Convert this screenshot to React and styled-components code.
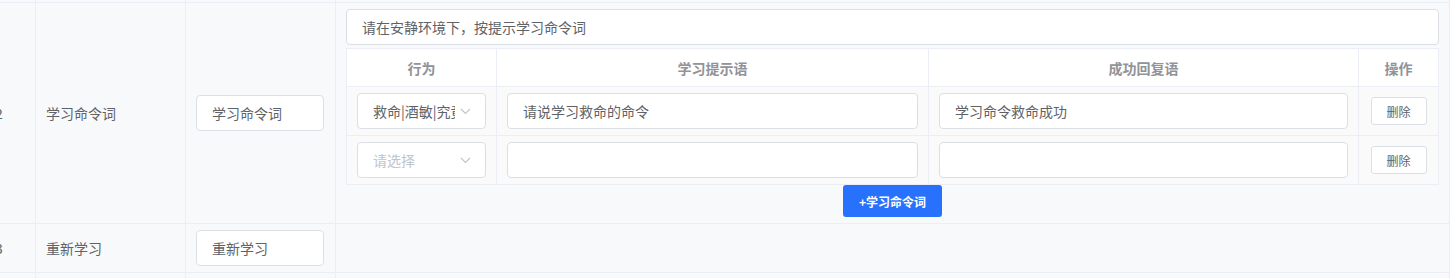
import React from 'react';
import styled, { createGlobalStyle } from 'styled-components';

const GlobalStyle = createGlobalStyle`
  * { box-sizing: border-box; }
  html, body {
    margin: 0;
    padding: 0;
    background: #fff;
    overflow: hidden;
    font-family: "Noto Sans CJK SC", "Noto Sans", sans-serif;
    font-size: 14px;
    color: #606266;
  }
`

const COLUMNS = '73px 150px 150px 1114px'

const STEPS = [
  { action: '救命|酒敏|究竟', prompt: '请说学习救命的命令', reply: '学习命令救命成功' },
  { action: '', prompt: '', reply: '' },
]

const Chevron = () => (
  <svg width="11" height="7" viewBox="0 0 11 7" fill="none">
    <path d="M1 1l4.5 4.5L10 1" stroke="#c0c4cc" strokeWidth="1.1" />
  </svg>
)

const App = () => {
  return (
    <>
      <GlobalStyle />
      <Page>
        <Table>
          <Row height="3px">
            <EmptyCell /><EmptyCell /><EmptyCell /><EmptyCell />
          </Row>

          <Row>
            <IndexCell>2</IndexCell>
            <Cell>学习命令词</Cell>
            <Cell><Field width="128px">学习命令词</Field></Cell>
            <DetailCell>
              <Field>请在安静环境下，按提示学习命令词</Field>
              <Inner>
                <thead>
                  <tr>
                    <Th width="150px">行为</Th>
                    <Th width="432px">学习提示语</Th>
                    <Th width="430px">成功回复语</Th>
                    <Th>操作</Th>
                  </tr>
                </thead>
                <tbody>
                  {STEPS.map((step, i) => (
                    <tr key={i}>
                      <Td>
                        <Select>
                          <SelectText empty={!step.action}>{step.action || '请选择'}</SelectText>
                          <Chevron />
                        </Select>
                      </Td>
                      <Td><Field>{step.prompt}</Field></Td>
                      <Td><Field>{step.reply}</Field></Td>
                      <Td center><DeleteButton>删除</DeleteButton></Td>
                    </tr>
                  ))}
                </tbody>
              </Inner>
              <AddButton>+学习命令词</AddButton>
            </DetailCell>
          </Row>

          <Row>
            <IndexCell>3</IndexCell>
            <Cell>重新学习</Cell>
            <Cell><Field width="128px">重新学习</Field></Cell>
            <Cell />
          </Row>

          <Row height="60px">
            <EmptyCell /><EmptyCell /><EmptyCell /><EmptyCell />
          </Row>
        </Table>
      </Page>
    </>
  );
};

export default App;

const Page = styled.div`
  width: 1453px;
  height: 278px;
  overflow: hidden;
  background: #fff;
`

const Table = styled.div`
  margin-left: -37px;
  width: ${1114 + 150 + 150 + 73}px;
`

const Row = styled.div`
  display: grid;
  grid-template-columns: ${COLUMNS};
  height: ${p => p.height || 'auto'};
  border-bottom: 1px solid #ebeef5;
  background: #f8f9fb;
`

const Cell = styled.div`
  display: flex;
  align-items: center;
  padding: 6px 10px;
  border-right: 1px solid #ebeef5;
  overflow: hidden;
  min-height: 0;
  color: #606266;
`

const EmptyCell = styled.div`
  border-right: 1px solid #ebeef5;
`

const IndexCell = styled(Cell)`
  justify-content: center;
`

const DetailCell = styled(Cell)`
  flex-direction: column;
  align-items: stretch;
  padding: 6px 10px;
`

const Field = styled.div`
  display: flex;
  align-items: center;
  width: ${p => p.width || '100%'};
  height: 36px;
  padding: 0 15px;
  background: #fff;
  border: 1px solid #dcdfe6;
  border-radius: 4px;
  color: #606266;
  font-size: 14px;
  white-space: nowrap;
`

const Inner = styled.table`
  margin-top: 3px;
  width: 1093px;
  border-collapse: collapse;
  table-layout: fixed;
  border: 1px solid #ebeef5;
`

const Th = styled.th`
  width: ${p => p.width || 'auto'};
  height: 38px;
  padding: 0;
  background: #fff;
  border: 1px solid #ebeef5;
  color: #909399;
  font-size: 14px;
  font-weight: bold;
  text-align: center;
`

const Td = styled.td`
  height: 49px;
  padding: 0 10px;
  background: #fafafa;
  border: 1px solid #ebeef5;
  text-align: ${p => (p.center ? 'center' : 'left')};
  vertical-align: middle;

  > div { margin: 0 auto; }
`

const Select = styled.div`
  display: flex;
  align-items: center;
  justify-content: space-between;
  width: 129px;
  height: 36px;
  padding: 0 14px 0 15px;
  background: #fff;
  border: 1px solid #dcdfe6;
  border-radius: 4px;
`

const SelectText = styled.span`
  width: 82px;
  overflow: hidden;
  white-space: nowrap;
  color: ${p => (p.empty ? '#c0c4cc' : '#606266')};
  font-size: 14px;
`

const DeleteButton = styled.button`
  width: 56px;
  height: 28px;
  padding: 0;
  background: #fff;
  border: 1px solid #dcdfe6;
  border-radius: 3px;
  color: #606266;
  font-family: inherit;
  font-size: 12px;
`

const AddButton = styled.button`
  align-self: center;
  width: 99px;
  height: 32px;
  padding: 0;
  background: #2771fd;
  border: none;
  border-radius: 3px;
  color: #fff;
  font-family: inherit;
  font-size: 12px;
  font-weight: bold;
`
